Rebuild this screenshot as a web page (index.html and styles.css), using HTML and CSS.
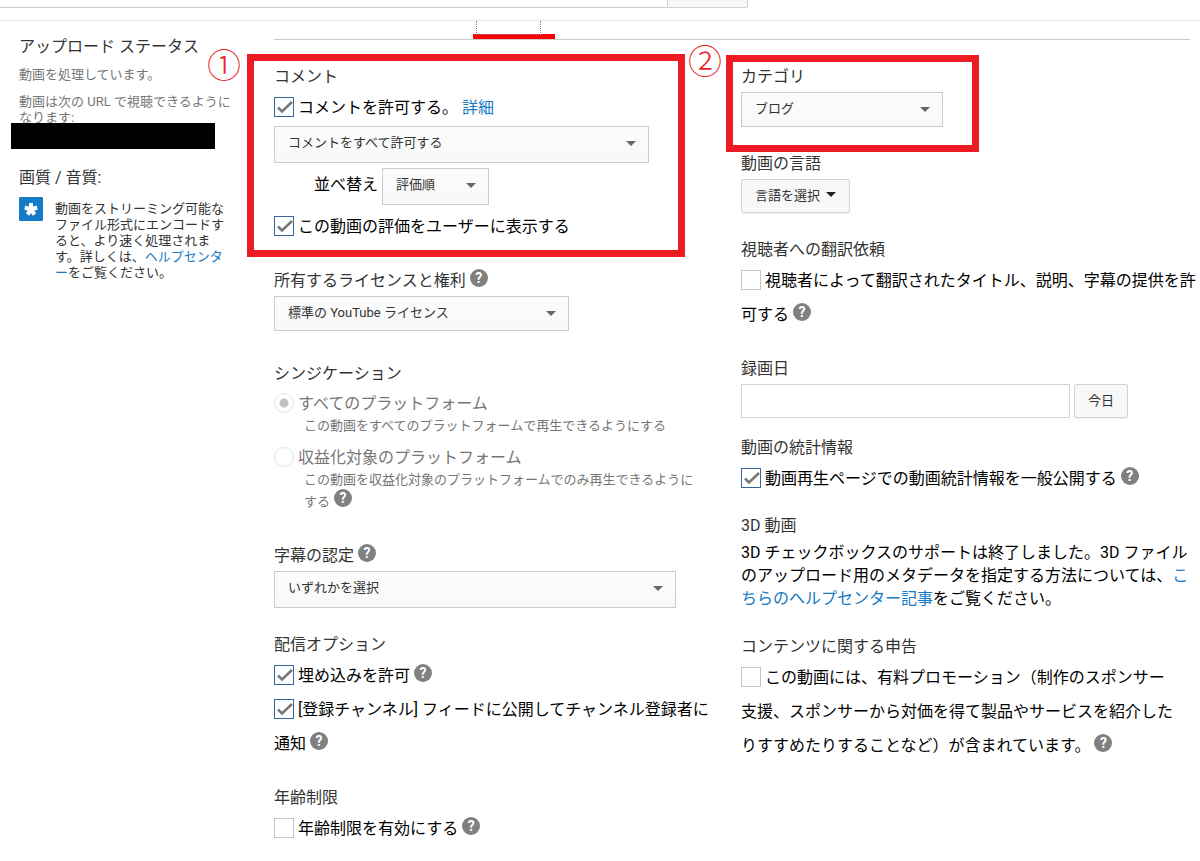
FILE: index.html
```html
<!DOCTYPE html>
<html lang="ja">
<head>
    <meta charset="UTF-8">
    <title>詳細設定</title>
    <link rel="stylesheet" href="styles.css">
</head>
<body>
    <header class="topbar">
        <form class="search">
            <input type="text" class="search-input" aria-label="検索">
            <button type="submit" class="search-button" aria-label="検索"></button>
        </form>
    </header>

    <div class="page">
        <aside class="sidebar">
            <h2 class="heading">アップロード ステータス</h2>
            <p class="status">動画を処理しています。</p>
            <p class="status status-url">動画は次の URL で視聴できるように<br>なります:</p>
            <div class="redacted"></div>

            <h2 class="heading quality-heading">画質 / 音質:</h2>
            <div class="tip">
                <svg class="tip-icon" viewBox="0 0 24 24" width="24" height="24">
                    <rect width="24" height="24" rx="1" fill="#167ac6"/>
                    <path d="M12 12.500V6M12 12.500L18.200 10.500M12 12.500L15.500 17.500M12 12.500L8.500 17.500M12 12.500L5.800 10.500" stroke="#fff" stroke-width="4" fill="none"/>
                </svg>
                <p class="tip-text">動画をストリーミング可能な<br>ファイル形式にエンコードす<br>ると、より速く処理されま<br>す。詳しくは、<a href="#">ヘルプセンタ<br>ー</a>をご覧ください。</p>
            </div>
        </aside>

        <main class="main">
            <div class="tabs">
                <div class="tab"><div class="tab-focus"></div></div>
            </div>

            <form class="columns">
                <div class="column">
                    <section class="section">
                        <div class="frame frame-comments"></div>
                        <span class="number number-one">①</span>
                        <h2 class="heading">コメント</h2>
                        <div class="row">
                            <input type="checkbox" class="check" id="comments" checked><label for="comments">コメントを許可する。</label>
                            <a href="#">詳細</a>
                        </div>
                        <div class="select select-comments">
                            <select class="tall" aria-label="コメント"><option>コメントをすべて許可する</option></select>
                        </div>
                        <div class="sort">
                            <label for="sort">並べ替え</label>
                            <div class="select">
                                <select class="tall" id="sort"><option>評価順</option></select>
                            </div>
                        </div>
                        <div class="row">
                            <input type="checkbox" class="check" id="ratings" checked><label for="ratings">この動画の評価をユーザーに表示する</label>
                        </div>
                    </section>

                    <section class="section">
                        <h2 class="heading"><label for="license">所有するライセンスと権利</label><button type="button" class="help">?</button></h2>
                        <div class="select select-license">
                            <select id="license"><option>標準の YouTube ライセンス</option></select>
                        </div>
                    </section>

                    <section class="section section-wide">
                        <h2 class="heading">シンジケーション</h2>
                        <div class="choice">
                            <input type="radio" class="radio" name="syndication" id="everywhere" checked disabled><label for="everywhere">すべてのプラットフォーム</label>
                            <p class="choice-note">この動画をすべてのプラットフォームで再生できるようにする</p>
                        </div>
                        <div class="choice">
                            <input type="radio" class="radio" name="syndication" id="monetized" disabled><label for="monetized">収益化対象のプラットフォーム</label>
                            <p class="choice-note">この動画を収益化対象のプラットフォームでのみ再生できるように<br>する<button type="button" class="help">?</button></p>
                        </div>
                    </section>

                    <section class="section section-wide">
                        <h2 class="heading"><label for="captions">字幕の認定</label><button type="button" class="help">?</button></h2>
                        <div class="select select-captions">
                            <select class="tall" id="captions"><option>いずれかを選択</option></select>
                        </div>
                    </section>

                    <section class="section">
                        <h2 class="heading">配信オプション</h2>
                        <div class="row">
                            <input type="checkbox" class="check" id="embed" checked><label for="embed">埋め込みを許可</label><button type="button" class="help">?</button>
                        </div>
                        <div class="row">
                            <input type="checkbox" class="check" id="feed" checked><label for="feed">[登録チャンネル] フィードに公開してチャンネル登録者に<br>通知</label><button type="button" class="help">?</button>
                        </div>
                    </section>

                    <section class="section">
                        <h2 class="heading">年齢制限</h2>
                        <div class="row">
                            <input type="checkbox" class="check" id="age"><label for="age">年齢制限を有効にする</label><button type="button" class="help">?</button>
                        </div>
                    </section>
                </div>

                <div class="column">
                    <section class="section">
                        <div class="frame frame-category"></div>
                        <span class="number number-two">②</span>
                        <h2 class="heading"><label for="category">カテゴリ</label></h2>
                        <div class="select select-category">
                            <select id="category"><option>ブログ</option></select>
                        </div>
                    </section>

                    <section class="section">
                        <h2 class="heading">動画の言語</h2>
                        <button type="button" class="button language">言語を選択</button>
                    </section>

                    <section class="section">
                        <h2 class="heading">視聴者への翻訳依頼</h2>
                        <div class="row">
                            <input type="checkbox" class="check" id="translate"><label for="translate">視聴者によって翻訳されたタイトル、説明、字幕の提供を許<br>可する</label><button type="button" class="help">?</button>
                        </div>
                    </section>

                    <section class="section">
                        <h2 class="heading"><label for="date">録画日</label></h2>
                        <div class="date">
                            <input type="text" class="date-input" id="date">
                            <button type="button" class="button">今日</button>
                        </div>
                    </section>

                    <section class="section section-tight">
                        <h2 class="heading">動画の統計情報</h2>
                        <div class="row">
                            <input type="checkbox" class="check" id="stats" checked><label for="stats">動画再生ページでの動画統計情報を一般公開する</label><button type="button" class="help">?</button>
                        </div>
                    </section>

                    <section class="section section-tight">
                        <h2 class="heading">3D 動画</h2>
                        <p class="text">3D チェックボックスのサポートは終了しました。3D ファイル<br>のアップロード用のメタデータを指定する方法については、<a href="#">こ<br>ちらのヘルプセンター記事</a>をご覧ください。</p>
                    </section>

                    <section class="section">
                        <h2 class="heading">コンテンツに関する申告</h2>
                        <div class="row">
                            <input type="checkbox" class="check" id="promo"><label for="promo">この動画には、有料プロモーション（制作のスポンサー<br>支援、スポンサーから対価を得て製品やサービスを紹介した<br>りすすめたりすることなど）が含まれています。</label><button type="button" class="help">?</button>
                        </div>
                    </section>
                </div>
            </form>
        </main>
    </div>
</body>
</html>
```
FILE: styles.css
```css
* {
    box-sizing: border-box;
}

body {
    margin: 0;
    background: #fff;
    color: #000;
    font-family: Roboto, "Noto Sans CJK JP", sans-serif;
    font-size: 16px;
}

p {
    margin: 0;
}

a {
    color: #167ac6;
    text-decoration: none;
}

input, select, button {
    margin: 0;
    font-family: inherit;
}

/* top bar */
.topbar {
    height: 21px;
    overflow: hidden;
    border-bottom: 1px solid #e8e8e8;
}

.search {
    display: flex;
    width: 748px;
    margin-top: -21px;
}

.search-input {
    flex: 1;
    height: 29px;
    border: 1px solid #ccc;
    border-width: 1px 0;
}

.search-button {
    width: 81px;
    height: 29px;
    border: 1px solid #d3d3d3;
    border-radius: 0 2px 2px 0;
    background: #f8f8f8;
}

/* layout */
.page {
    display: flex;
    padding-right: 10px;
}

.sidebar {
    flex: 0 0 274px;
    padding: 13px 0 0 19px;
}

.main {
    flex: 1;
}

.tabs {
    height: 19px;
    padding-left: 199px;
    border-bottom: 1px solid #ccc;
}

.tab {
    width: 82px;
    height: 18px;
    padding: 0 14px 0 3px;
    border-bottom: 5px solid #f00;
}

.tab-focus {
    height: 14px;
    border: 1px dotted #888;
    border-top: none;
}

.columns {
    display: grid;
    grid-template-columns: 1fr 1fr;
    gap: 18px;
    padding-top: 24px;
}

.column {
    min-width: 0;
    white-space: nowrap;
}

.section {
    position: relative;
    margin-bottom: 24px;
}

.section:has(+ .section-wide) {
    margin-bottom: 30px;
}

.section:has(+ .section-tight) {
    margin-bottom: 17px;
}

.heading {
    margin: 0;
    color: #333;
    font-size: 16px;
    font-weight: 400;
    line-height: 26px;
}

/* sidebar */
.status {
    margin-top: 7px;
    color: #767676;
    font-size: 13px;
    line-height: 16px;
}

.status-url {
    margin-top: 11px;
}

.redacted {
    position: relative;
    width: 204px;
    height: 26px;
    margin: -3px 0 0 -8px;
    background: #000;
}

.quality-heading {
    margin-top: 16px;
}

.tip {
    display: flex;
    gap: 12px;
    margin-top: 6px;
}

.tip-text {
    padding-top: 4px;
    color: #333;
    font-size: 13px;
    line-height: 16px;
}

/* controls */
.row {
    margin-top: 1px;
    line-height: 34px;
}

.row + .row {
    margin-top: 0;
}

.check, .radio {
    appearance: none;
    width: 20px;
    height: 20px;
    margin-right: 4px;
    border: 1px solid #c6c6c6;
    background: #fff;
    vertical-align: -4px;
}

.check:checked {
    border-color: #36649c;
    background: #fff url("data:image/svg+xml,%3Csvg xmlns='http://www.w3.org/2000/svg' viewBox='0 0 18 18'%3E%3Cpath d='M3 9.500l4 4L17 4' fill='none' stroke='%23777' stroke-width='2.500'/%3E%3C/svg%3E");
}

.radio {
    border-color: #e4e4e4;
    border-radius: 50%;
}

.radio:checked {
    background: radial-gradient(circle, #c0c0c0 4px, #fff 5px);
}

.choice {
    margin-top: 6px;
    color: #767676;
    line-height: 22px;
}

.choice + .choice {
    margin-top: 10px;
}

.choice-note {
    padding-left: 30px;
    font-size: 13px;
}

.help {
    width: 18px;
    height: 18px;
    margin: -6px 0 -6px 4px;
    padding: 0;
    border: none;
    border-radius: 50%;
    background: #808080;
    color: #fff;
    font-size: 14px;
    font-weight: 700;
    line-height: 18px;
    text-align: center;
    vertical-align: 3px;
}

.select {
    position: relative;
    margin-top: 2px;
}

.select select {
    display: block;
    width: 100%;
    height: 35px;
    padding: 0 30px 3px 13px;
    appearance: none;
    border: 1px solid #ccc;
    border-radius: 0;
    background: linear-gradient(#fcfcfc, #f8f8f8);
    color: #333;
    font-size: 13px;
}

.select .tall {
    height: 37px;
    padding-bottom: 5px;
}

.select::after {
    content: "";
    position: absolute;
    top: 15px;
    right: 13px;
    border: 5px solid transparent;
    border-top-color: #666;
    border-bottom: none;
    pointer-events: none;
}

.select-comments {
    width: 375px;
    margin-top: 1px;
}

.select-license {
    width: 295px;
}

.select-captions {
    width: 402px;
}

.select-category {
    width: 202px;
}

.sort {
    display: flex;
    gap: 4px;
    margin: 5px 0;
    padding-left: 40px;
    line-height: 34px;
}

.sort .select {
    width: 107px;
    margin-top: 0;
}

.button {
    height: 34px;
    padding: 0 13px 3px;
    border: 1px solid #d3d3d3;
    border-radius: 2px;
    background: #f8f8f8;
    box-shadow: 0 1px 0 rgba(0, 0, 0, 0.05);
    color: #333;
    font-size: 13px;
}

.language {
    display: flex;
    align-items: center;
    gap: 6px;
    margin-top: 2px;
}

.language::after {
    content: "";
    border: 5px solid transparent;
    border-top-color: #222;
    border-bottom: none;
}

.date {
    display: flex;
    gap: 4px;
    margin-top: 2px;
}

.date-input {
    width: 329px;
    height: 34px;
    border: 1px solid #d3d3d3;
}

.text {
    margin-top: 2px;
    line-height: 23px;
}

/* annotations */
.frame {
    position: absolute;
    border: 7px solid #ed1c24;
    pointer-events: none;
}

.frame-comments {
    top: -10px;
    left: -27px;
    width: 438px;
    height: 203px;
}

.frame-category {
    top: -9px;
    left: -15px;
    width: 253px;
    height: 97px;
}

.number {
    position: absolute;
    color: #ed1c24;
    font-size: 34px;
    font-weight: 300;
    line-height: 34px;
}

.number-one {
    top: -15px;
    left: -67px;
}

.number-two {
    top: -19px;
    left: -53px;
}
```
